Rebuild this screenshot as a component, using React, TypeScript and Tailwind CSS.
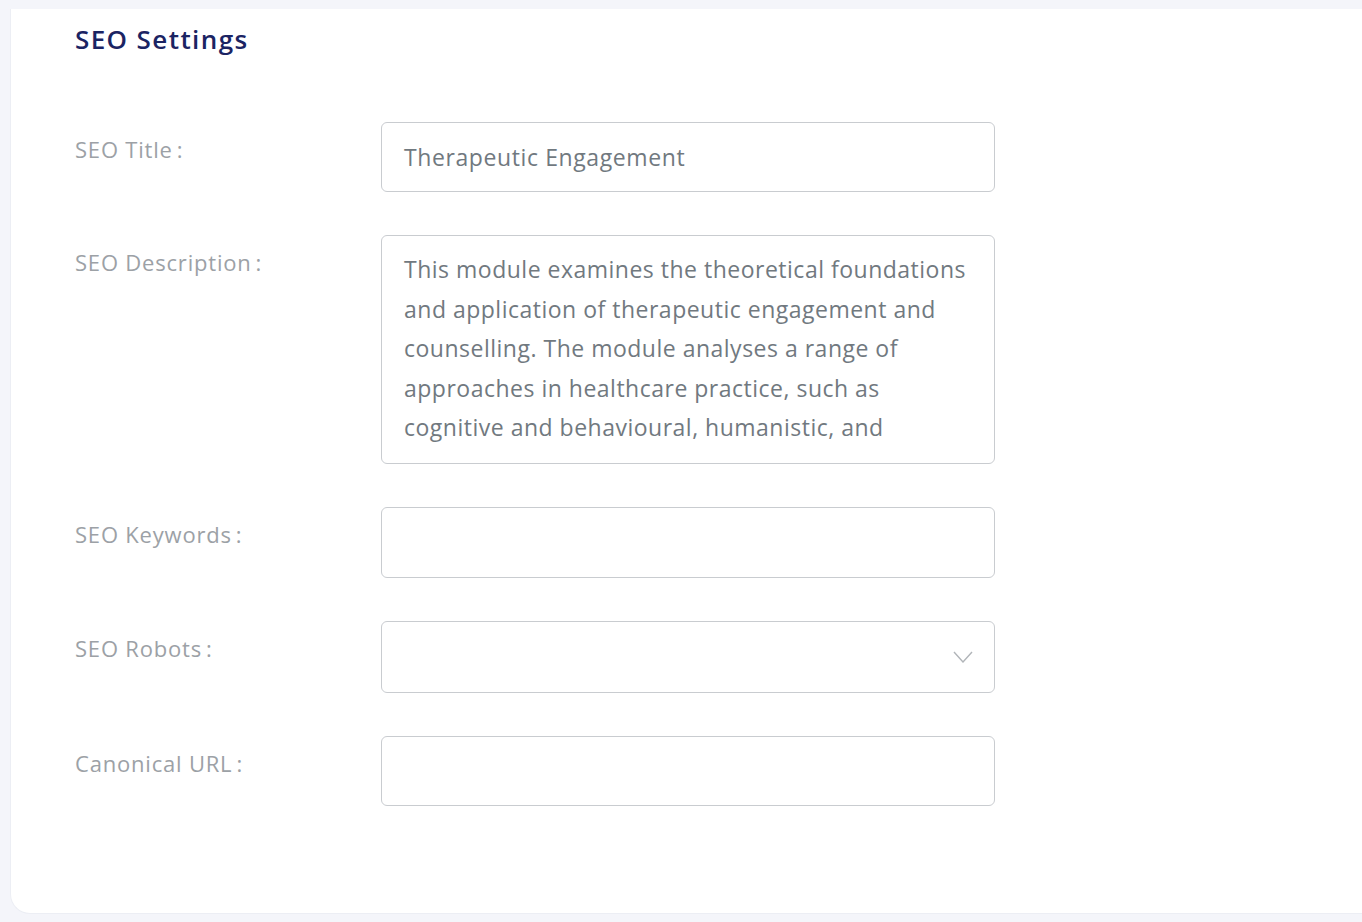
import React from "react";

const font = { fontFamily: '"Open Sans", "Noto Sans", sans-serif' };

function Label({ text }: { text: string }) {
  return (
    <div className="w-[306px] shrink-0 pt-[12px] text-[22px] leading-[30px] tracking-[0.8px] text-[#9ca1a6]">
      {text}
      <span className="ml-[4px] mr-[8px]">:</span>
    </div>
  );
}

function Row({ label, children }: { label: string; children?: React.ReactNode }) {
  return (
    <div className="flex">
      <Label text={label} />
      {children}
    </div>
  );
}

const descLines = [
  "This module examines the theoretical foundations",
  "and application of therapeutic engagement and",
  "counselling. The module analyses a range of",
  "approaches in healthcare practice, such as",
  "cognitive and behavioural, humanistic, and",
];

export default function App() {
  return (
    <div className="min-h-[922px] w-full overflow-hidden bg-[#f4f5fa] pl-[10px] pt-[9px]" style={font}>
      <div className="h-[905px] w-[1380px] rounded-bl-[20px] border-b border-l border-[#eceef4] bg-white pl-[64px] pt-[20px]">
        <h2 className="flex h-[20px] items-center text-[26px] font-semibold leading-[20px] tracking-[1.4px] text-[#1b2463]">SEO Settings</h2>
        <div className="mt-[73px] flex flex-col gap-[43px]">
          <Row label="SEO Title">
            <div className="flex h-[70px] w-[614px] items-center rounded-[6px] border border-[#c9ccd0] px-[22px] text-[23px] tracking-[0.6px] text-[#71797f]">
              Therapeutic Engagement
            </div>
          </Row>
          <Row label="SEO Description">
            <div className="h-[229px] w-[614px] overflow-hidden rounded-[6px] border border-[#c9ccd0] px-[22px] pt-[14px] text-[23px] leading-[39.5px] tracking-[0.5px] text-[#71797f]">
              {descLines.map((l) => (
                <div key={l} className="whitespace-nowrap">{l}</div>
              ))}
            </div>
          </Row>
          <Row label="SEO Keywords">
            <div className="h-[71px] w-[614px] rounded-[6px] border border-[#c9ccd0]" />
          </Row>
          <Row label="SEO Robots">
            <div className="flex h-[72px] w-[614px] items-center justify-end rounded-[6px] border border-[#c9ccd0] pr-[21px]">
              <svg width="20" height="12" viewBox="0 0 20 12" fill="none">
                <path d="M1 1 L10 11 L19 1" stroke="#b1b5b9" strokeWidth="1.4" />
              </svg>
            </div>
          </Row>
          <Row label="Canonical URL">
            <div className="h-[70px] w-[614px] rounded-[6px] border border-[#c9ccd0]" />
          </Row>
        </div>
      </div>
    </div>
  );
}
